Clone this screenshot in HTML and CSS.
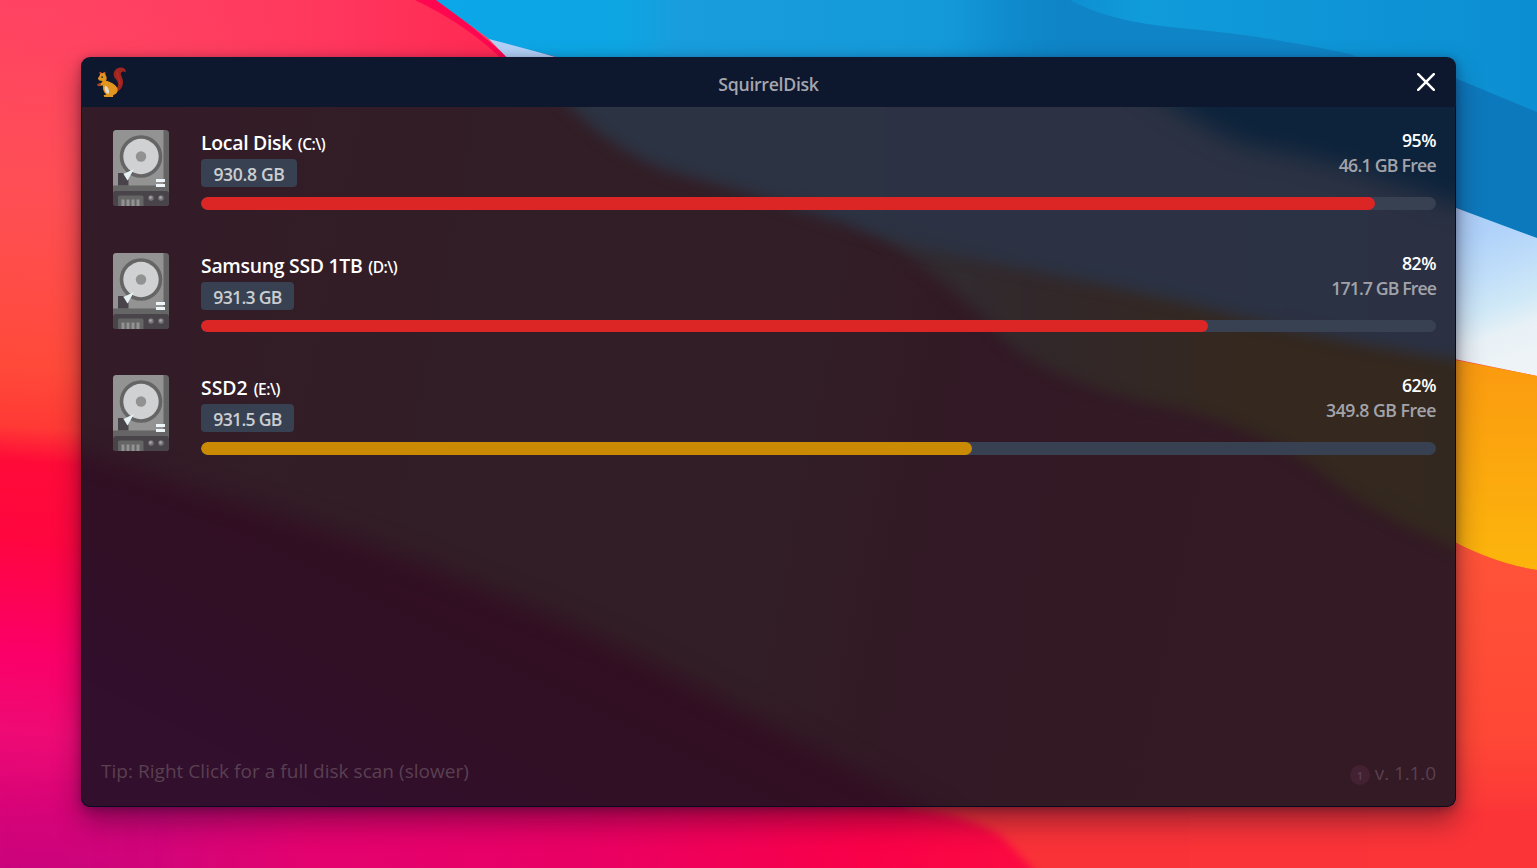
FILE: index.html
```html
<!DOCTYPE html>
<html lang="en">
<head>
<meta charset="utf-8">
<title>SquirrelDisk</title>
<link rel="stylesheet" href="styles.css">
</head>
<body>
<svg class="wallpaper" viewBox="0 0 1537 868" preserveAspectRatio="none" aria-hidden="true">
  <defs>
    <linearGradient id="left" gradientUnits="userSpaceOnUse" x1="40" y1="0" x2="-20" y2="868">
      <stop offset="0" stop-color="#ff4263"/><stop offset=".22" stop-color="#ff4f55"/><stop offset=".42" stop-color="#ff4a3a"/><stop offset=".49" stop-color="#ff3a35"/><stop offset=".53" stop-color="#ff0b38"/><stop offset=".62" stop-color="#ff0640"/><stop offset=".75" stop-color="#fb0068"/><stop offset=".84" stop-color="#ef0a74"/><stop offset=".93" stop-color="#d80478"/><stop offset="1" stop-color="#ca047d"/>
    </linearGradient>
    <linearGradient id="bottom" x1="0" y1="0" x2="1" y2="0">
      <stop offset="0" stop-color="#d2047b"/><stop offset=".1" stop-color="#d20479"/><stop offset=".2" stop-color="#e3026f"/><stop offset=".38" stop-color="#e90064"/><stop offset=".56" stop-color="#f90049"/><stop offset=".68" stop-color="#fb0c40"/><stop offset="1" stop-color="#fb1c3c"/>
    </linearGradient>
    <linearGradient id="fadein" x1="0" y1="0" x2="1" y2="0">
      <stop offset="0" stop-color="#000"/><stop offset=".05" stop-color="#222"/><stop offset=".12" stop-color="#fff"/>
    </linearGradient>
    <mask id="bottommask"><rect y="780" width="1537" height="88" fill="url(#fadein)"/></mask>
    <linearGradient id="topred" x1="0" y1="0" x2="1" y2="0">
      <stop offset="0" stop-color="#ff4263" stop-opacity="0"/><stop offset=".65" stop-color="#ff365d"/><stop offset="1" stop-color="#ff2852"/>
    </linearGradient>
    <linearGradient id="blue" x1="0" y1="0" x2="1" y2="0">
      <stop offset="0" stop-color="#0ba7e8"/><stop offset=".17" stop-color="#0ea5e3"/><stop offset=".22" stop-color="#199ddd"/><stop offset=".45" stop-color="#159ad9"/><stop offset=".56" stop-color="#0d8dcf"/><stop offset=".64" stop-color="#109bdb"/><stop offset="1" stop-color="#0c8fd2"/>
    </linearGradient>
    <linearGradient id="azure" x1="0" y1="0" x2="1" y2="0">
      <stop offset="0" stop-color="#0f84c6" stop-opacity="0"/><stop offset=".25" stop-color="#0f84c6"/><stop offset="1" stop-color="#0f84c6"/>
    </linearGradient>
    <linearGradient id="ice" x1="0" y1="0" x2=".2" y2="1">
      <stop offset="0" stop-color="#abccf7"/><stop offset=".25" stop-color="#b0d2fa"/><stop offset=".5" stop-color="#c0def9"/><stop offset=".7" stop-color="#d1e9f7"/><stop offset=".85" stop-color="#e8f1f6"/><stop offset="1" stop-color="#edf3f7"/>
    </linearGradient>
    <linearGradient id="gold" x1="0" y1="0" x2="0" y2="1">
      <stop offset="0" stop-color="#fb9a10"/><stop offset="1" stop-color="#fcb50c"/>
    </linearGradient>
    <linearGradient id="coral" x1="0" y1="0" x2="0" y2="1">
      <stop offset="0" stop-color="#ff5438"/><stop offset=".6" stop-color="#ff4836"/><stop offset=".85" stop-color="#fc3638"/><stop offset="1" stop-color="#fb3338"/>
    </linearGradient>
    <linearGradient id="ember" x1="0" y1="0" x2="1" y2="0">
      <stop offset="0" stop-color="#f83138"/><stop offset="1" stop-color="#fc3538"/>
    </linearGradient>
    <filter id="soft" x="-20%" y="-20%" width="140%" height="140%" color-interpolation-filters="sRGB"><feGaussianBlur stdDeviation="4"/></filter>
  </defs>
  <rect width="1537" height="868" fill="url(#left)"/>
  <rect y="780" width="1537" height="88" fill="url(#bottom)" mask="url(#bottommask)"/>
  <path d="M1440 534Q1490 563 1537 570V868H1440Z" fill="url(#coral)"/>
  <path d="M880 770L910 808Q960 812 1000 835Q1030 865 1060 900H1600V810H1440V770Z" fill="url(#ember)" filter="url(#soft)"/>
  <path d="M0 0H440L515 65H0Z" fill="url(#topred)"/>
  <path d="M415 0H440L516 64H507Q468 25 415 0Z" fill="#ff0750"/>
  <path d="M485 35L580 65H514Z" fill="#b3d1f7"/>
  <path d="M436 0H1537V245L1440 200L1300 80L560 58L489 39Z" fill="url(#blue)"/>
  <path d="M960 0H1070Q1110 22 1180 28Q1270 36 1350 54L1390 70H960Z" fill="url(#azure)"/>
  <path d="M1440 72L1537 112V238L1440 202Z" fill="#0d79bd"/>
  <path d="M1440 202L1537 238V376L1440 356Z" fill="url(#ice)"/>
  <path d="M1440 357L1537 376V570Q1490 563 1440 534Z" fill="url(#gold)"/>
</svg>

<main class="window">
  <header class="titlebar">
    <svg class="logo" viewBox="0 0 29 30" aria-label="SquirrelDisk logo">
      <path d="M18.400 22.500C22.200 19.500 21.800 15.500 18.600 12C14.500 7 17.500 1 23.500.5C27 .2 29.200 2.500 28.800 5.500C27.400 3.800 24.600 4.200 23.900 6.100C23.200 8.300 26.400 11.300 26 15.800C25.600 20.600 22.600 24.500 18.800 25Z" fill="#a02520"/>
      <path d="M20.500 4.500C18.800 8.800 24 12 22.800 17.500" fill="none" stroke="#b32c25" stroke-width="1.300"/>
      <path d="M3 8L2.600 5L5.400 6.300L8 4.800L8.600 8.200C10 9.600 10 12.200 8.900 13.800C13 14.400 18.800 17.600 20.400 21.300C21.400 25.200 18.800 27.700 16.300 28.100L16 30H7.400L6.600 28.300L9.300 27.400C6.300 25 5.500 21.500 6 18.500L1 19L.3 17.300L4.500 15.800L5.500 13.900L2.200 13.500L.8 11.600Z" fill="#e1951e"/>
      <path d="M8.300 18.500C6.500 22 8.300 26 11.500 27C12.900 23.500 11.200 20 8.300 18.500Z" fill="#e4d9ce"/>
      <path d="M3 7L2.600 4.700L5 6ZM6.700 6L8.200 4.700L8.500 7Z" fill="#c6401f"/>
      <circle cx="5.200" cy="10.100" r=".9" fill="#33232a"/>
      <path d="M.2 17L3.800 15.900L3.500 18.300L1 18.700Z" fill="#a5321f"/>
    </svg>
    <h1 class="title">SquirrelDisk</h1>
    <button class="close" aria-label="Close">
      <svg viewBox="0 0 18 18"><path d="M1.200 1.200L16.800 16.800M16.800 1.200L1.200 16.800"/></svg>
    </button>
  </header>

  <section class="content">
    <svg class="tint" viewBox="81 107 1375 700" preserveAspectRatio="none" aria-hidden="true">
      <defs>
        <filter id="b5" x="-10%" y="-10%" width="120%" height="120%" color-interpolation-filters="sRGB"><feGaussianBlur stdDeviation="7"/></filter>
        <filter id="b12" x="-10%" y="-10%" width="120%" height="120%" color-interpolation-filters="sRGB"><feGaussianBlur stdDeviation="12"/></filter>
        <linearGradient id="base" x1="0" y1="0" x2="1" y2=".1"><stop offset="0" stop-color="#331b27"/><stop offset=".35" stop-color="#321e26"/><stop offset=".56" stop-color="#321e26"/><stop offset=".68" stop-color="#321925"/><stop offset="1" stop-color="#331a24"/></linearGradient>
        <linearGradient id="slate" x1="0" y1="0" x2="1" y2="0"><stop offset="0" stop-color="#2c3342"/><stop offset="1" stop-color="#2b3143"/></linearGradient>
        <linearGradient id="olive" x1="0" y1="0" x2="1" y2="0"><stop offset="0" stop-color="#302c34"/><stop offset=".3" stop-color="#32282a"/><stop offset=".6" stop-color="#34281f"/><stop offset="1" stop-color="#33281f"/></linearGradient>
        <linearGradient id="plum" gradientUnits="userSpaceOnUse" x1="420" y1="540" x2="290" y2="800"><stop offset="0" stop-color="#320f22"/><stop offset=".5" stop-color="#310f25"/><stop offset=".8" stop-color="#310f2b"/><stop offset="1" stop-color="#310f2d"/></linearGradient>
      </defs>
      <rect x="81" y="107" width="1375" height="700" fill="url(#base)"/>
      <path d="M-50 415Q120 462 190 488Q340 530 470 583Q570 622 650 662Q790 735 860 772Q920 800 990 850H-50Z" fill="url(#plum)" filter="url(#b12)"/>
      <path d="M850 215Q950 280 1010 345Q1060 385 1180 410Q1280 435 1330 480Q1390 525 1500 565V350L1100 230Z" fill="url(#olive)" filter="url(#b5)"/>
      <path d="M530 60Q590 142 665 170Q790 205 850 226Q910 248 970 258Q1100 284 1180 302Q1330 344 1500 366V60Z" fill="url(#slate)" filter="url(#b5)"/>
      <path d="M1110 60Q1200 130 1250 146Q1350 160 1500 222V60Z" fill="#0c233b" filter="url(#b12)"/>
    </svg>

    <svg class="sprite" aria-hidden="true">
      <symbol id="drive" viewBox="0 0 56 76">
        <rect width="56" height="76" rx="3.500" fill="#656565"/>
        <path d="M3.500 0H50.500V56H0V3.500Q0 0 3.500 0Z" fill="#939393"/>
        <rect y="55.500" width="56" height="6" fill="#656565"/>
        <path d="M3 61H53Q56 61 56 64V72.500Q56 76 52.500 76H3.500Q0 76 0 72.500V64Q0 61 3 61Z" fill="#48444a"/>
        <circle cx="28" cy="26.500" r="21.300" fill="#656565"/>
        <circle cx="28" cy="26.500" r="17.700" fill="#d0d1d3"/>
        <circle cx="28" cy="26.500" r="5.200" fill="#929292"/>
        <path d="M5 43H10L15.500 50V55.500H5Z" fill="#48444a"/>
        <path d="M10.500 44L21 39L14.500 50.500Z" fill="#e6f1f6"/>
        <path d="M43 49H52V52H43ZM43 54H52V57H43Z" fill="#edf5f8"/>
        <path d="M5 67Q5 65.500 6.500 65.500H29Q30.500 65.500 30.500 67V76H5Z" fill="#656565"/>
        <path d="M8.500 69.500H11.500V76H8.500ZM13.500 69.500H16.500V76H13.500ZM18.500 69.500H21.500V76H18.500ZM23.500 69.500H26.500V76H23.500Z" fill="#929292"/>
        <circle cx="38" cy="68" r="2.700" fill="#777579"/><circle cx="48" cy="68" r="2.700" fill="#777579"/>
        <circle cx="37.500" cy="67.500" r="1.200" fill="#aaa"/><circle cx="47.500" cy="67.500" r="1.200" fill="#aaa"/>
      </symbol>
    </svg>

    <ul class="disks">
      <li class="disk">
        <svg class="drive"><use href="#drive"/></svg>
        <div class="details">
          <div class="summary">
            <div><h2 class="name">Local Disk <small>(C:\)</small></h2><span class="size wide">930.8 GB</span></div>
            <div class="usage"><strong>95%</strong><span class="free snug">46.1 GB Free</span></div>
          </div>
          <div class="bar"><div class="fill red" style="width:95.05%"></div></div>
        </div>
      </li>
      <li class="disk">
        <svg class="drive"><use href="#drive"/></svg>
        <div class="details">
          <div class="summary">
            <div><h2 class="name">Samsung SSD 1TB <small>(D:\)</small></h2><span class="size">931.3 GB</span></div>
            <div class="usage"><strong>82%</strong><span class="free tight">171.7 GB Free</span></div>
          </div>
          <div class="bar"><div class="fill red" style="width:81.55%"></div></div>
        </div>
      </li>
      <li class="disk">
        <svg class="drive"><use href="#drive"/></svg>
        <div class="details">
          <div class="summary">
            <div><h2 class="name short">SSD2 <small>(E:\)</small></h2><span class="size">931.5 GB</span></div>
            <div class="usage"><strong>62%</strong><span class="free">349.8 GB Free</span></div>
          </div>
          <div class="bar"><div class="fill amber" style="width:62.4%"></div></div>
        </div>
      </li>
    </ul>

    <footer class="footer">
      <span class="tip">Tip: Right Click for a full disk scan (slower)</span>
      <span class="version"><i class="count">1</i><span>v. 1.1.0</span></span>
    </footer>
  </section>
</main>
</body>
</html>
```

FILE: styles.css
```css
* { box-sizing: border-box; margin: 0; padding: 0; }
body {
  width: 1537px;
  height: 868px;
  padding: 57px 81px 61px;
  overflow: hidden;
  font-family: "Open Sans", "Noto Sans", sans-serif;
  color: #fff;
}
.wallpaper { position: absolute; inset: 0; width: 1537px; height: 868px; z-index: -1; }
.window {
  display: flex;
  flex-direction: column;
  width: 1375px;
  height: 750px;
  border-radius: 9px;
  overflow: hidden;
  box-shadow: 0 14px 28px rgba(20, 10, 30, .42), 0 2px 10px rgba(20, 10, 30, .32);
}
.titlebar {
  display: grid;
  grid-template-columns: 29px 1fr 29px;
  align-items: center;
  height: 50px;
  padding: 0 21px 0 16px;
  background: #0d172e;
}
.logo { width: 29px; height: 30px; }
.title {
  padding: 3px 0 0 5px;
  text-align: center;
  font-size: 17.7px;
  font-weight: 600;
  letter-spacing: -.3px;
  color: #a5a6ad;
}
.close { justify-self: end; width: 18px; height: 18px; border: 0; background: none; }
.close svg { display: block; width: 18px; height: 18px; }
.close path { stroke: #fff; stroke-width: 2.5; stroke-linecap: round; }

.content {
  position: relative;
  z-index: 0;
  flex: 1;
  display: flex;
  flex-direction: column;
  justify-content: space-between;
  padding: 22px 20px 18px;
}
.content::after {
  content: "";
  position: absolute;
  inset: 0;
  border: 1px solid #080a20;
  border-top: 0;
  border-radius: 0 0 9px 9px;
}
.tint { position: absolute; inset: 0; width: 100%; height: 100%; z-index: -1; }
.sprite { position: absolute; width: 0; height: 0; }
.disks { display: flex; flex-direction: column; gap: 41.5px; list-style: none; }
.disk { display: flex; gap: 32px; height: 81px; padding-left: 12px; }
.drive { flex: none; width: 56px; height: 76px; margin-top: 1px; }
.details { flex: 1; }
.summary { display: flex; justify-content: space-between; height: 68px; }
.name {
  height: 28px;
  margin-bottom: 2px;
  font-size: 19.4px;
  font-weight: 600;
  line-height: 28px;
  letter-spacing: -.28px;
  white-space: nowrap;
}
.name small { font-size: 15.5px; letter-spacing: -.5px; margin-left: 1px; }
.name.short { letter-spacing: 0; }
.size {
  display: block;
  width: 93px;
  height: 28px;
  border-radius: 4px;
  background: #374151;
  color: #cbcdd0;
  font-size: 17.6px;
  font-weight: 600;
  line-height: 30px;
  letter-spacing: -.7px;
  text-align: center;
}
.size.wide { width: 96px; letter-spacing: -.35px; }
.usage {
  display: flex;
  flex-direction: column;
  align-items: flex-end;
  margin-top: -1px;
  font-size: 17.7px;
  line-height: 25px;
  letter-spacing: -.5px;
}
.usage strong { font-weight: 600; }
.free { color: #a2a3aa; font-weight: 600; }
.free.snug { letter-spacing: -.75px; }
.free.tight { letter-spacing: -.9px; }
.bar { height: 12.5px; border-radius: 7px; background: #374151; overflow: hidden; }
.fill { height: 100%; border-radius: 7px; }
.red { background: #dc2626; }
.amber { background: #ca8a04; }
.footer {
  display: flex;
  justify-content: space-between;
  align-items: center;
  height: 32px;
  font-size: 19px;
  color: #5a4051;
}
.tip { margin-top: -4px; letter-spacing: .03px; }
.version { display: flex; align-items: center; gap: 5px; letter-spacing: -.1px; }
.count {
  width: 20px;
  height: 20px;
  margin-top: 3px;
  border-radius: 50%;
  background: #432032;
  font-size: 11px;
  font-style: normal;
  font-weight: 600;
  line-height: 21px;
  text-align: center;
}
```
